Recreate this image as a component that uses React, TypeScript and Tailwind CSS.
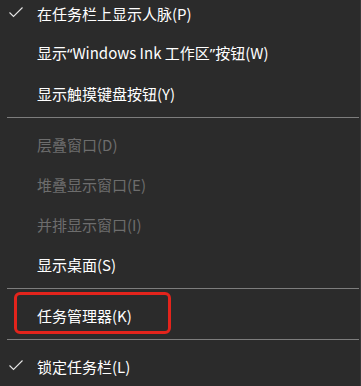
import React from "react";

type Item = { label: React.ReactNode; key: string; checked?: boolean; disabled?: boolean; highlight?: boolean };

const Q = ({ c }: { c: string }) => <span style={{ fontFamily: '"Noto Sans", sans-serif' }}>{c}</span>;

const groups: Item[][] = [
  [
    { key: "p", label: "在任务栏上显示人脉(P)", checked: true },
    {
      key: "w",
      label: (
        <>
          显示<Q c="“" />Windows Ink 工作区<Q c="”" />按钮(W)
        </>
      ),
    },
    { key: "y", label: "显示触摸键盘按钮(Y)" },
  ],
  [
    { key: "d", label: "层叠窗口(D)", disabled: true },
    { key: "e", label: "堆叠显示窗口(E)", disabled: true },
    { key: "i", label: "并排显示窗口(I)", disabled: true },
    { key: "s", label: "显示桌面(S)" },
  ],
  [{ key: "k", label: "任务管理器(K)", highlight: true }],
  [{ key: "l", label: "锁定任务栏(L)", checked: true }],
];

const Check = () => (
  <svg width="16" height="14" viewBox="0 0 16 14" className="absolute left-[8px]">
    <path d="M1.5 6.5 L5.5 10.5 L14.5 1.5" fill="none" stroke="#e6e6e6" strokeWidth="1.1" />
  </svg>
);

const Row = ({ item }: { item: Item }) => (
  <div className="relative flex h-[40px] items-center pl-[37px]">
    {item.checked && <Check />}
    <span
      className={`text-[15px] leading-none whitespace-nowrap ${
        item.disabled ? "text-[#6d6d6d]" : "text-white"
      }`}
    >
      {item.label}
    </span>
    {item.highlight && (
      <div className="absolute left-[14px] top-[-3px] h-[42px] w-[157px] rounded-[6px] border-[3px] border-[#e3241c]" />
    )}
  </div>
);

export default function App() {
  return (
    <div
      className="h-[386px] w-[361px] overflow-hidden bg-[#2b2b2b] border-r border-[#3a3a3a]"
      style={{ fontFamily: '"Noto Sans CJK SC", "Noto Sans", sans-serif' }}
    >
      <div className="mt-[-7px]">
        {groups.map((g, i) => (
          <div key={i}>
            {i > 0 && (
              <div className="pt-[4px] pb-[6px] pl-[7px] pr-[1px]">
                <div className="h-px bg-[#7d7d7d]" />
              </div>
            )}
            {g.map((it) => (
              <Row key={it.key} item={it} />
            ))}
          </div>
        ))}
      </div>
    </div>
  );
}
